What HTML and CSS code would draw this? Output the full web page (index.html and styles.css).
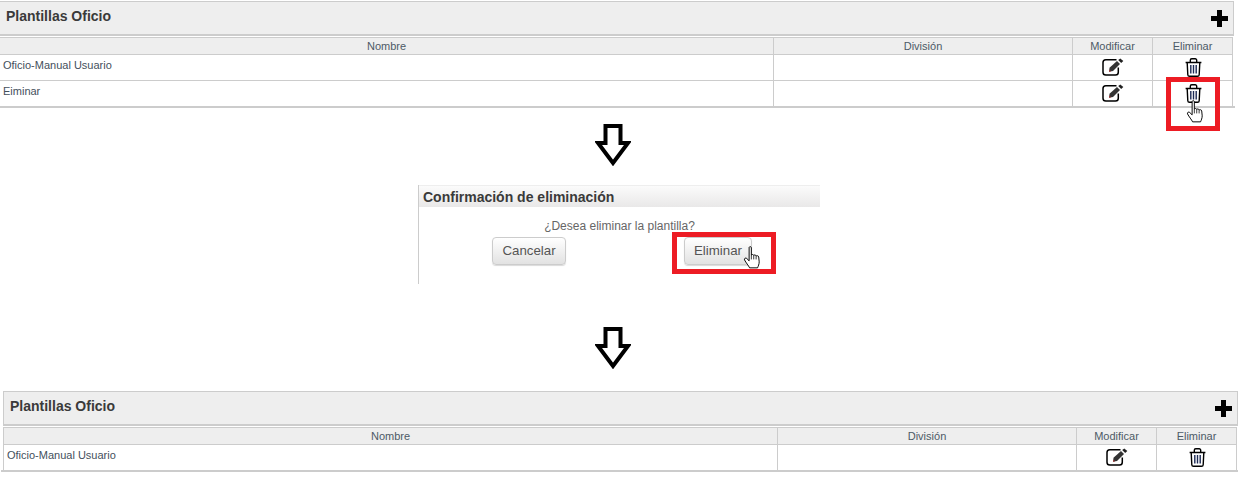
FILE: index.html
```html
<!DOCTYPE html>
<html lang="es">
<head>
<meta charset="utf-8">
<title>Plantillas Oficio</title>
<link rel="stylesheet" href="styles.css">
</head>
<body>
<svg width="0" height="0" class="defs">
  <defs>
    <symbol id="edit" viewBox="0 0 22 18">
      <path d="M14.500 1.800H3.800A2.800 2.800 0 0 0 1 4.600V14.200A2.800 2.800 0 0 0 3.800 17H13.500A2.800 2.800 0 0 0 16.300 14.200V9.500" fill="none" stroke="#000" stroke-width="1.500"/>
      <path d="M7.500 9.700L15 3L18 6L11 13L7 13.700Z" fill="#333"/>
      <path d="M7.500 11.500L9 13.400L7 13.700Z" fill="#a33"/>
      <path d="M16.200 2L18.300 .4L21.300 2.900L19.200 5Z" fill="#222"/>
    </symbol>
    <symbol id="trash" viewBox="0 0 17 19">
      <path d="M.6 4.500H16.400M2.200 4.700L2.800 16.700A1.700 1.700 0 0 0 4.500 18.300H12.500A1.700 1.700 0 0 0 14.200 16.700L14.800 4.700M5.300 4.300V2.300A1.500 1.500 0 0 1 6.800 .8H10.200A1.500 1.500 0 0 1 11.700 2.300V4.300" fill="none" stroke="#000" stroke-width="1.400"/>
      <path d="M5.800 7V15.500M8.500 7V15.500M11.200 7V15.500" stroke="#1c2a55" stroke-width="1.400"/>
    </symbol>
    <symbol id="hand" viewBox="0 0 18 24">
      <path d="M6 1.500C6 .5 8.300 .5 8.300 1.500V9.500C9 8.600 10.500 8.600 10.800 9.800C11.500 9 13 9.200 13.300 10.500C14 9.800 15.800 10 16 11.500L16.500 16.500C16.500 19 15.500 21 14.800 22.800H6.500C5.500 20.500 2.700 17.500 1.200 14.500C.6 13 2.300 12 3.500 13L6 15.500Z" fill="#fff" stroke="#000" stroke-width="1"/>
      <path d="M8.300 9.500V14M10.800 9.800V14M13.300 10.500V14" stroke="#000" stroke-width=".8"/>
    </symbol>
    <symbol id="arrow" viewBox="0 0 36 42">
      <path d="M10.500 2H25.500V19H33L18 39L3 19H10.500Z" fill="#fff" stroke="#000" stroke-width="4"/>
    </symbol>
  </defs>
</svg>

<main class="page">
  <section class="panel panel-first">
    <header class="panel-head">
      <h2 class="panel-title">Plantillas Oficio</h2>
      <span class="plus" aria-label="Agregar"></span>
    </header>
    <div class="table">
      <div class="th">Nombre</div><div class="th">División</div><div class="th">Modificar</div><div class="th">Eliminar</div>
      <div class="td">Oficio-Manual Usuario</div><div class="td"></div>
      <div class="td icon"><svg class="i-edit"><use href="#edit"/></svg></div>
      <div class="td icon"><svg class="i-trash"><use href="#trash"/></svg></div>
      <div class="td">Eiminar</div><div class="td"></div>
      <div class="td icon"><svg class="i-edit"><use href="#edit"/></svg></div>
      <div class="td icon">
        <svg class="i-trash"><use href="#trash"/></svg>
        <span class="red-box box-trash"></span>
        <svg class="hand hand-trash"><use href="#hand"/></svg>
      </div>
    </div>
  </section>

  <div class="arrow-row first-arrow"><svg class="arrow"><use href="#arrow"/></svg></div>

  <section class="dialog">
    <h3 class="dialog-title">Confirmación de eliminación</h3>
    <p class="dialog-text">¿Desea eliminar la plantilla?</p>
    <div class="dialog-actions">
      <button class="btn btn-cancel" type="button">Cancelar</button>
      <span class="callout-btn">
        <button class="btn btn-delete" type="button">Eliminar</button>
        <span class="red-box box-btn"></span>
        <svg class="hand hand-btn"><use href="#hand"/></svg>
      </span>
    </div>
  </section>

  <div class="arrow-row second-arrow"><svg class="arrow"><use href="#arrow"/></svg></div>

  <section class="panel panel-last">
    <header class="panel-head">
      <h2 class="panel-title">Plantillas Oficio</h2>
      <span class="plus" aria-label="Agregar"></span>
    </header>
    <div class="table">
      <div class="th">Nombre</div><div class="th">División</div><div class="th">Modificar</div><div class="th">Eliminar</div>
      <div class="td">Oficio-Manual Usuario</div><div class="td"></div>
      <div class="td icon"><svg class="i-edit"><use href="#edit"/></svg></div>
      <div class="td icon"><svg class="i-trash"><use href="#trash"/></svg></div>
    </div>
  </section>
</main>
</body>
</html>
```

FILE: styles.css
```css
* { box-sizing: border-box; }
html, body { margin: 0; padding: 0; background: #fff; }
body { font-family: "Liberation Sans", Arial, sans-serif; color: #333; overflow: hidden; }
.defs { position: absolute; }
.page { width: 1239px; height: 483px; padding-top: 1px; }

.panel { width: 1235px; border-bottom: 2px solid #ccc; }
.panel-first .panel-head { margin-right: 1px; }
.panel-last { width: 1237px; margin: 22px 0 0 1px; padding-left: 2px; }

.panel-head {
  height: 35px;
  background: #eee;
  border: solid #ccc;
  border-width: 1px 1px 2px 0;
  display: flex;
  align-items: flex-start;
  justify-content: space-between;
  padding: 6px 5px 0 6px;
}
.panel-last .panel-head { border-left: 1px solid #ccc; }
.panel-title { margin: 0; font-size: 14px; line-height: 16px; font-weight: bold; color: #3a3a3a; }
.plus {
  width: 17px; height: 17px; margin-top: 2px;
  background:
    linear-gradient(#000, #000) center / 17px 5px no-repeat,
    linear-gradient(#000, #000) center / 5px 17px no-repeat;
}

.table {
  display: grid;
  grid-template-columns: 774px 299px 80px 80px;
  border-top: 1px solid #fff;
}
.panel-last .table { grid-template-columns: 775px 299px 80px 80px; }
.th {
  height: 18px;
  background: #eee;
  border: solid #ccc;
  border-width: 1px 1px 1px 0;
  font-size: 11px;
  line-height: 16px;
  text-align: center;
  color: #4d5a66;
}
.td {
  height: 26px;
  border: solid #ccc;
  border-width: 0 1px 1px 0;
  font-size: 11px;
  line-height: 20px;
  padding-left: 3px;
  color: #44505c;
}
.td:nth-last-child(-n+4) { height: 25px; border-bottom: 0; }
.panel-last .th:first-child { border-left: 1px solid #ccc; }
.panel-last .td:nth-child(5) { border-left: 1px solid #ccc; }
.icon { padding: 3px 0 0 1px; display: flex; justify-content: center; align-items: flex-start; position: relative; }
.i-edit { width: 22px; height: 18px; }
.i-trash { width: 17px; height: 19px; }

.red-box { position: absolute; border: 5px solid #ed1c24; display: block; pointer-events: none; }
.box-trash { left: 13px; top: -4px; width: 54px; height: 54px; }
.hand { position: absolute; width: 18px; height: 23px; }
.hand-trash { left: 33px; top: 19px; }

.arrow-row { display: flex; justify-content: center; padding-right: 13px; }
.arrow { width: 36px; height: 42px; display: block; }
.first-arrow { margin-top: 16px; }
.second-arrow { margin-top: 43px; }

.dialog {
  width: 402px;
  height: 99px;
  margin: 19px 0 0 418px;
  border-left: 1px solid #ccc;
}
.dialog-title {
  margin: 0;
  height: 22px;
  padding: 3px 0 0 4px;
  font-size: 14px;
  line-height: 16px;
  font-weight: bold;
  color: #3a3a3a;
  background: linear-gradient(#fbfbfb, #e9e8e8);
  border-top: 1px solid #eee;
}
.dialog-text { margin: 12px 0 0; font-size: 12px; line-height: 14px; text-align: center; color: #666; }
.dialog-actions { display: flex; align-items: flex-start; gap: 118px; padding-left: 73px; margin-top: 4px; }
.btn {
  display: block;
  height: 28px;
  padding: 0 0 2px;
  font-family: inherit;
  font-size: 13.300px;
  color: #555;
  background: linear-gradient(#fff, #e2e2e2);
  border: 1px solid #ccc;
  border-radius: 4px;
  box-shadow: 0 1px 1px rgba(0,0,0,.15);
}
.btn-cancel { width: 74px; }
.btn-delete { width: 68px; }
.callout-btn { position: relative; display: block; }
.box-btn { left: -12px; top: -5px; width: 104px; height: 42px; }
.hand-btn { left: 59px; top: 9px; }
```
